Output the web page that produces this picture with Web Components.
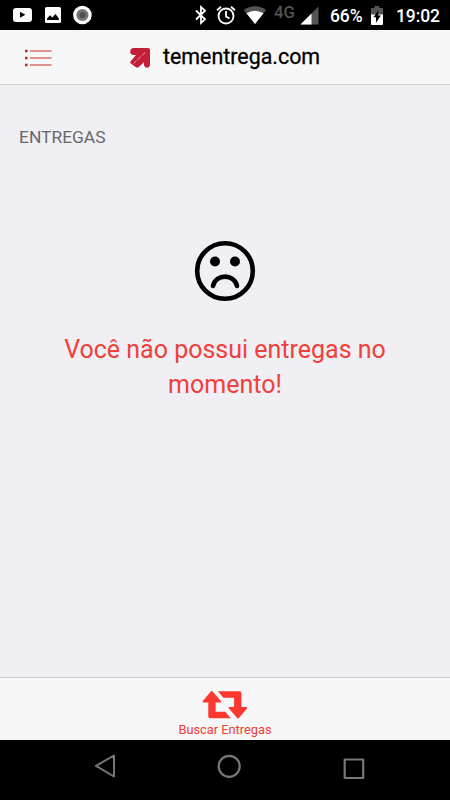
<!doctype html>
<html lang="pt-BR">
<head>
<meta charset="utf-8">
<meta name="viewport" content="width=device-width">
<title>tementrega.com</title>
<style>
html, body {
  height: 100%;
  margin: 0;
}

body {
  font-family: Roboto, "Liberation Sans", sans-serif;
  background: #efeff4;
  overflow: hidden;
}
</style>
</head>
<body>
<app-shell>
  <status-bar slot="status" battery="66%" time="19:02"></status-bar>
  <title-bar slot="header">tementrega.com</title-bar>
  <section-title>ENTREGAS</section-title>
  <empty-state>Você não possui entregas no momento!</empty-state>
  <tab-bar slot="footer">Buscar Entregas</tab-bar>
  <nav-bar slot="nav"></nav-bar>
</app-shell>

<script>
/**
 * Base class: renders the static `template` of its subclass into a shadow root.
 */
class BaseElement extends HTMLElement {
  constructor() {
    super();
    const t = document.createElement('template');
    t.innerHTML = this.constructor.template;
    this.attachShadow({mode: 'open'}).appendChild(t.content.cloneNode(true));
  }
}

class AppShell extends BaseElement {}
AppShell.template = `
<style>
:host {
  display: flex;
  flex-direction: column;
  height: 100vh;
}

main {
  flex: 1;
  min-height: 0;
  background: #efeff4;
}
</style>
<slot name="status"></slot>
<slot name="header"></slot>
<main><slot></slot></main>
<slot name="footer"></slot>
<slot name="nav"></slot>
`;

class StatusBar extends BaseElement {
  connectedCallback() {
    this.shadowRoot.getElementById('battery').textContent = this.getAttribute('battery');
    this.shadowRoot.getElementById('time').textContent = this.getAttribute('time');
  }
}
StatusBar.template = `
<style>
:host {
  display: flex;
  align-items: center;
  justify-content: space-between;
  box-sizing: border-box;
  height: 30px;
  padding: 0 10px 0 12px;
  background: #000;
  color: #fff;
  font-size: 17.5px;
  line-height: 30px;
}

div {
  display: flex;
  align-items: center;
}

svg {
  display: block;
  flex: none;
}

.left { gap: 12px; }
.network {
  width: 22px;
  margin: 0 4px 0 7px;
  color: #545454;
  font-size: 16.5px;
  font-weight: 500;
  line-height: 25px;
  align-self: flex-start;
}
#battery {
  width: 33px;
  margin: 0 7px 0 11px;
  padding-top: 1px;
}
#time {
  width: 44px;
  margin-left: 12px;
  padding-top: 1px;
}
#battery, #time { font-weight: 500; letter-spacing: -0.1px; }
</style>
<div class="left">
  <svg width="21" height="30" viewBox="0 0 21 30">
    <rect x="1" y="8" width="19" height="14" rx="3" fill="#fff"/>
    <path d="M8 11.8v6l5.3-3z"/>
  </svg>
  <svg width="16" height="30" viewBox="0 0 16 30">
    <rect x="0" y="7" width="16" height="16" rx="1.6" fill="#fff"/>
    <path d="M2 20v-1.5l3-3.2 2.2 2.1 3.3-3.4 3.3 4.5V20z"/>
  </svg>
  <svg width="19" height="30" viewBox="0 0 19 30">
    <circle cx="9.4" cy="15" r="9.3" fill="#fff"/>
    <circle cx="9.4" cy="15" r="6.1" fill="#777"/>
    <circle cx="9.4" cy="15" r="3.1" fill="#505050"/>
  </svg>
</div>
<div>
  <svg width="12" height="30" viewBox="0 0 12 30" fill="none" stroke="#fff" stroke-width="1.8">
    <path d="M1 10.5l9 8.8-4 3.7V7l4 3.7-9 8.8"/>
  </svg>
  <svg width="20" height="30" viewBox="0 0 20 30" fill="none" stroke="#fff" stroke-width="1.8" style="margin-left:9px">
    <circle cx="10" cy="16" r="7.5"/>
    <path d="M10 11v5.4l3.6 2.2M1 10.2l4-3.4M19 10.2l-4-3.4"/>
  </svg>
  <svg width="24" height="30" viewBox="0 0 24 30" style="margin-left:7px">
    <path d="M.9 10.1Q12 2.6 23.1 10.1L12 24z" fill="#545454"/>
    <path d="M3.5 13.3Q12 8.3 20.5 13.3L12 24z" fill="#fff"/>
  </svg>
  <span class="network">4G</span>
  <svg width="19" height="30" viewBox="0 0 19 30">
    <path d="M18.5 6.5v18H.5z" fill="#545454"/>
    <path d="M11.5 13.5v11H.5z" fill="#fff"/>
  </svg>
  <span id="battery"></span>
  <svg width="14" height="30" viewBox="0 0 14 30">
    <path d="M4.5 6h4.7v2H12q1 0 1 1v6H1V9q0-1 1-1h2.5z" fill="#545454"/>
    <path d="M1 14.5h12V24q0 1-1 1H2q-1 0-1-1z" fill="#fff"/>
    <path d="M8.3 10.5l-4.9 6.8H6v5.5l4.9-7.2H8.3z"/>
  </svg>
  <span id="time"></span>
</div>
`;

class TitleBar extends BaseElement {}
TitleBar.template = `
<style>
:host {
  display: grid;
  grid-template-columns: 129px 1fr;
  align-items: center;
  box-sizing: border-box;
  height: 55px;
  background: #f7f7f7;
  border-bottom: 1px solid #d3d3d6;
  font-size: 21.4px;
  color: #000;
  -webkit-text-stroke: 0.3px #000;
}

svg { display: block; }
.menu { margin: 2px 0 0 24px; }
h1 {
  display: flex;
  align-items: center;
  gap: 12px;
  margin: 0;
  font: inherit;
  line-height: 54px;
}
h1 svg { margin-top: 2px; }
</style>
<svg class="menu" width="28" height="18" viewBox="0 0 28 18">
  <path d="M1 2h2.5M1 9h2.5M1 16h2.5" stroke="#c4222b" stroke-width="2.4"/>
  <path d="M6 2h21.5M6 9h21.5M6 16h21.5" stroke="#d8706e" stroke-width="1.5"/>
</svg>
<h1>
  <svg width="22" height="22" viewBox="0 0 22 22">
    <path d="M4.5 1H19q2 0 2 2V17.5q0 3-3 3.2-2.6 0-3.1-2.7V15.2L9.500 20.300q-1.200.9-2.500 0L1.500 16.200q-.9-1 .2-2L7 8H4.200Q1.200 7.500 1.200 4.500 1.500 1.300 4.500 1z" fill="#c41f3a"/>
    <path d="M16.3 5.4L4.5 16.5" stroke="#ee98a2" stroke-width="1" stroke-dasharray="5 1"/>
  </svg>
  <span><slot></slot></span>
</h1>
`;

class SectionTitle extends BaseElement {}
SectionTitle.template = `
<style>
:host {
  display: block;
  padding: 41px 19px 0;
  color: #68686c;
  font-size: 17.4px;
  line-height: 22px;
}
</style>
<slot></slot>
`;

class EmptyState extends BaseElement {}
EmptyState.template = `
<style>
:host {
  display: flex;
  flex-direction: column;
  align-items: center;
  padding: 92px 40px 0;
  color: #f0403a;
  font-size: 25px;
  line-height: 35px;
  text-align: center;
}

p { margin: 30px 0 0; }
</style>
<svg width="62" height="62" viewBox="0 0 62 62">
  <circle cx="31" cy="31" r="27.8" fill="none" stroke="#000" stroke-width="4.6"/>
  <circle cx="21" cy="21.5" r="5"/>
  <circle cx="41" cy="21.5" r="5"/>
  <path d="M19 46C22 33.5 40 33.5 43 46" fill="none" stroke="#000" stroke-width="4.6" stroke-linecap="round"/>
</svg>
<p><slot></slot></p>
`;

class TabBar extends BaseElement {}
TabBar.template = `
<style>
:host {
  display: flex;
  flex-direction: column;
  align-items: center;
  box-sizing: border-box;
  height: 63px;
  padding-top: 12px;
  border-top: 1px solid #cbcbd0;
  background: #f7f7f7;
  color: #f23c34;
  font-size: 12.8px;
  line-height: 20px;
}
</style>
<svg width="46" height="30" viewBox="0 0 46 30" fill="#fb3830">
  <path d="M9 1.3Q9.7.5 10.4 1.3L18.9 11q.7 1.2-.6 1.5H13.6V21.7H23.3L28.8 28.3H8q-1.7 0-1.7-1.7V12.5H1.5Q.1 12.2.8 11z"/>
  <path d="M15.9 1.2H37.7q1.7 0 1.7 1.7V17h4.9q1.4.3.7 1.5l-8.3 9.7q-.7.7-1.4 0l-8.4-9.7q-.7-1.2.6-1.5H32.1V7.8H21.4z"/>
</svg>
<span><slot></slot></span>
`;

class NavBar extends BaseElement {}
NavBar.template = `
<style>
:host {
  display: flex;
  justify-content: space-between;
  box-sizing: border-box;
  height: 60px;
  padding: 0 84px 0 93px;
  background: #000;
}
</style>
<svg width="24" height="60" viewBox="0 0 24 60" fill="none" stroke="#777" stroke-width="2" stroke-linejoin="round">
  <path d="M21 15.5v21L3 25.8z"/>
</svg>
<svg width="26" height="60" viewBox="0 0 26 60" fill="none" stroke="#777" stroke-width="2.2">
  <circle cx="12.2" cy="26.3" r="10.5"/>
</svg>
<svg width="24" height="60" viewBox="0 0 24 60" fill="none" stroke="#777" stroke-width="2.2" stroke-linejoin="round">
  <rect x="2.7" y="19.5" width="18.5" height="18.5"/>
</svg>
`;

customElements.define('app-shell', AppShell);
customElements.define('status-bar', StatusBar);
customElements.define('title-bar', TitleBar);
customElements.define('section-title', SectionTitle);
customElements.define('empty-state', EmptyState);
customElements.define('tab-bar', TabBar);
customElements.define('nav-bar', NavBar);
</script>
</body>
</html>
